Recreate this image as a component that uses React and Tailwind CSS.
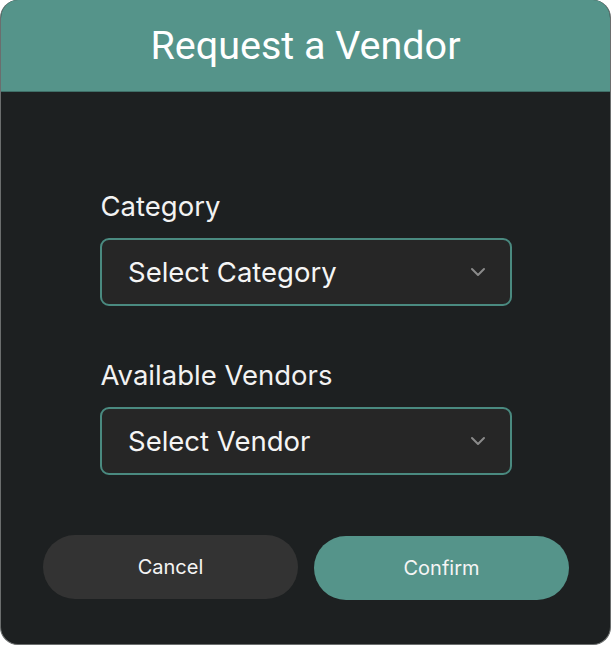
import React from "react";

function Chevron() {
  return (
    <svg width="16" height="10" viewBox="0 0 16 10" fill="none">
      <path d="M2 2l6 6 6-6" stroke="#8a8a8a" strokeWidth="2" strokeLinecap="round" strokeLinejoin="round" />
    </svg>
  );
}

function Field({ label, placeholder }) {
  return (
    <div className="flex flex-col gap-[15px]">
      <div className="text-[27.5px] leading-[33px] text-[#f2f2f2] pl-px">{label}</div>
      <div className="h-[68px] w-[412px] rounded-[9px] border-2 border-[#4a8a80] bg-[#262626] flex items-center justify-between pl-[26.5px] pr-[23.5px]">
        <span className="text-[27.5px] leading-[33px] text-[#f5f5f5]">{placeholder}</span>
        <Chevron />
      </div>
    </div>
  );
}

export default function App() {
  return (
    <div className="w-[612px] h-[645px] bg-white" style={{ fontFamily: "Inter, 'Noto Sans', sans-serif" }}>
      <div className="w-[611px] h-[645px] rounded-[18px] overflow-hidden bg-[#1d2021] border-x border-b border-[#6b6e6e] flex flex-col">
        <div className="h-[92px] bg-[#55948a] flex items-center justify-center border-b border-[#3f6f68]">
          <h1 className="text-[39.5px] leading-[46px] text-white" style={{ fontFamily: "Roboto, sans-serif" }}>
            Request a Vendor
          </h1>
        </div>
        <div className="flex flex-col items-center pt-[98px]">
          <div className="flex flex-col gap-[53px]">
            <Field label="Category" placeholder="Select Category" />
            <Field label="Available Vendors" placeholder="Select Vendor" />
          </div>
        </div>
        <div className="flex justify-center gap-[16px] mt-[60px] pl-[1px]">
          <button className="w-[255px] h-[64px] rounded-full bg-[#333333] text-[#f5f5f5] text-[20px]">Cancel</button>
          <button className="w-[255px] h-[64px] rounded-full bg-[#55948a] text-[#f5f5f5] text-[20px] translate-y-px">Confirm</button>
        </div>
      </div>
    </div>
  );
}
